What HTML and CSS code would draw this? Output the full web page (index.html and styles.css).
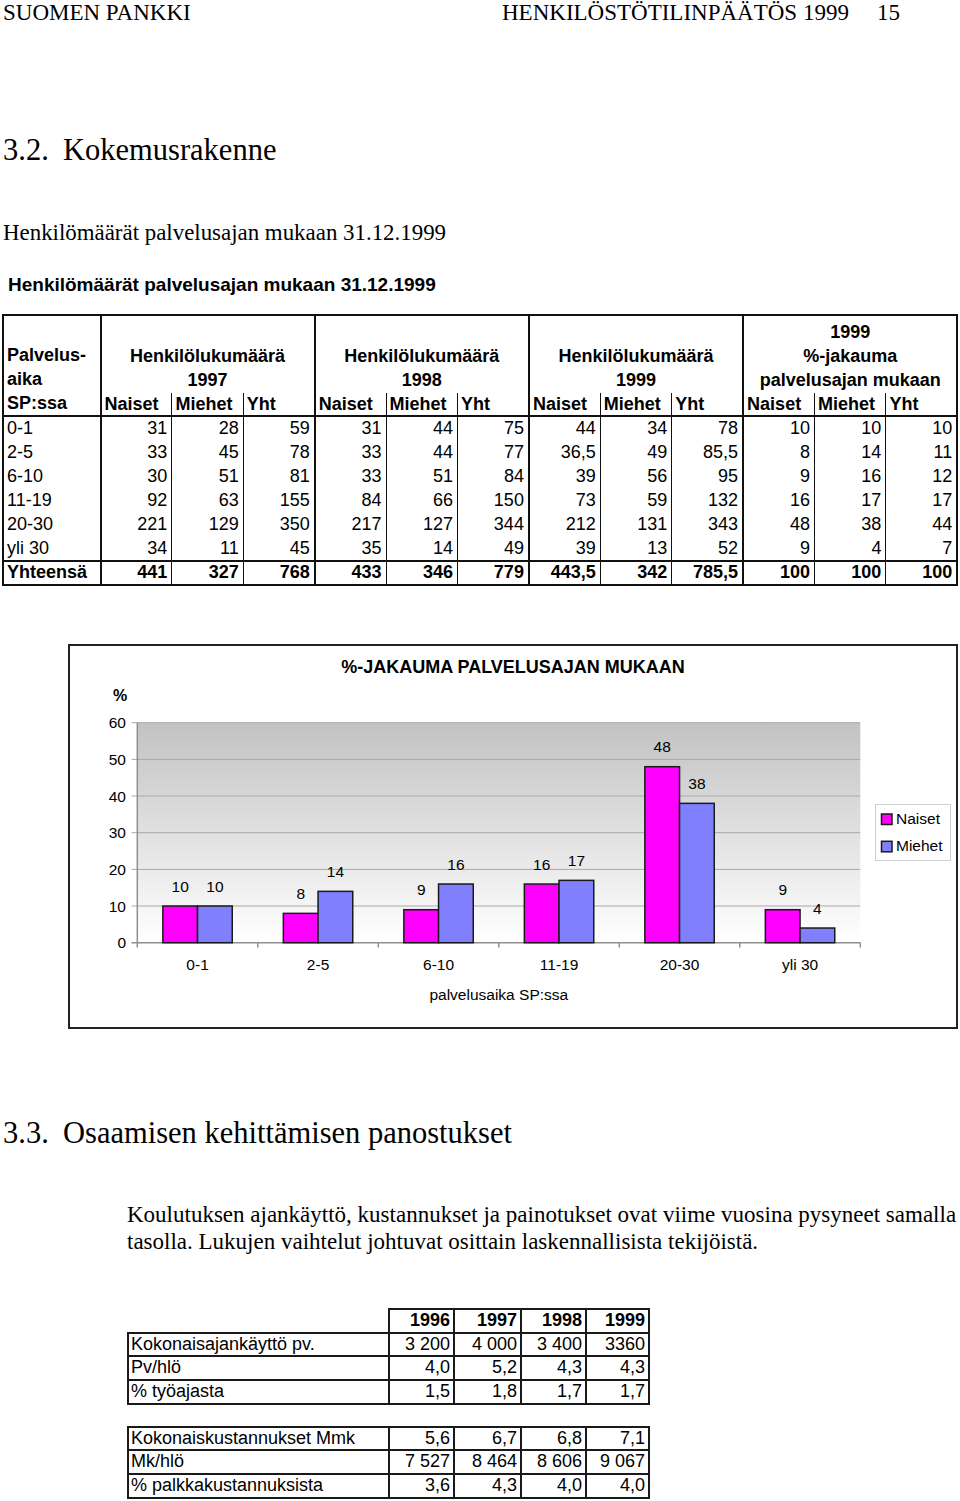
FILE: index.html
```html
<!DOCTYPE html>
<html lang="fi">
<head>
<meta charset="utf-8">
<title>Henkilöstötilinpäätös 1999</title>
<link rel="stylesheet" href="styles.css">
</head>
<body>
<header class="page-head">
  <span class="ph-left">SUOMEN PANKKI</span>
  <span class="ph-title">HENKILÖSTÖTILINPÄÄTÖS 1999</span>
  <span class="ph-num">15</span>
</header>

<h2 class="sec sec-a"><span class="sec-no">3.2.</span>Kokemusrakenne</h2>
<p class="sub">Henkilömäärät palvelusajan mukaan 31.12.1999</p>
<p class="tbl-title">Henkilömäärät palvelusajan mukaan 31.12.1999</p>

<table class="exp">
  <colgroup><col class="c-lab"><col span="12" class="c-num"></colgroup>
  <thead>
    <tr class="hr1">
      <th rowspan="2" class="lab-h">Palvelus-<br>aika<br>SP:ssa</th>
      <th colspan="3" class="grp">Henkilölukumäärä<br>1997</th>
      <th colspan="3" class="grp">Henkilölukumäärä<br>1998</th>
      <th colspan="3" class="grp">Henkilölukumäärä<br>1999</th>
      <th colspan="3" class="grp">1999<br>%-jakauma<br>palvelusajan mukaan</th>
    </tr>
    <tr class="hr2">
      <th class="g1">Naiset</th><th>Miehet</th><th>Yht</th>
      <th class="g1">Naiset</th><th>Miehet</th><th>Yht</th>
      <th class="g1">Naiset</th><th>Miehet</th><th>Yht</th>
      <th class="g1">Naiset</th><th>Miehet</th><th>Yht</th>
    </tr>
  </thead>
  <tbody>
    <tr><td class="lab">0-1</td><td class="g1">31</td><td>28</td><td>59</td><td class="g1">31</td><td>44</td><td>75</td><td class="g1">44</td><td>34</td><td>78</td><td class="g1">10</td><td>10</td><td>10</td></tr>
    <tr><td class="lab">2-5</td><td class="g1">33</td><td>45</td><td>78</td><td class="g1">33</td><td>44</td><td>77</td><td class="g1">36,5</td><td>49</td><td>85,5</td><td class="g1">8</td><td>14</td><td>11</td></tr>
    <tr><td class="lab">6-10</td><td class="g1">30</td><td>51</td><td>81</td><td class="g1">33</td><td>51</td><td>84</td><td class="g1">39</td><td>56</td><td>95</td><td class="g1">9</td><td>16</td><td>12</td></tr>
    <tr><td class="lab">11-19</td><td class="g1">92</td><td>63</td><td>155</td><td class="g1">84</td><td>66</td><td>150</td><td class="g1">73</td><td>59</td><td>132</td><td class="g1">16</td><td>17</td><td>17</td></tr>
    <tr><td class="lab">20-30</td><td class="g1">221</td><td>129</td><td>350</td><td class="g1">217</td><td>127</td><td>344</td><td class="g1">212</td><td>131</td><td>343</td><td class="g1">48</td><td>38</td><td>44</td></tr>
    <tr><td class="lab">yli 30</td><td class="g1">34</td><td>11</td><td>45</td><td class="g1">35</td><td>14</td><td>49</td><td class="g1">39</td><td>13</td><td>52</td><td class="g1">9</td><td>4</td><td>7</td></tr>
    <tr class="total"><td class="lab">Yhteensä</td><td class="g1">441</td><td>327</td><td>768</td><td class="g1">433</td><td>346</td><td>779</td><td class="g1">443,5</td><td>342</td><td>785,5</td><td class="g1">100</td><td>100</td><td>100</td></tr>
  </tbody>
</table>

<figure class="chart">
  <svg class="chart-svg" width="886" height="381" viewBox="70 644 886 381" xmlns="http://www.w3.org/2000/svg">
    <defs>
      <linearGradient id="plotbg" x1="0" y1="0" x2="0" y2="1">
        <stop offset="0" stop-color="#c2c2c2"/>
        <stop offset="1" stop-color="#ffffff"/>
      </linearGradient>
    </defs>
    <text class="c-title" x="513" y="671" text-anchor="middle">%-JAKAUMA PALVELUSAJAN MUKAAN</text>
    <text class="c-unit" x="120" y="698.5" text-anchor="middle">%</text>

    <rect x="137.3" y="720.7" width="723" height="220" fill="url(#plotbg)"/>
    <g class="grid">
      <line x1="131.5" y1="720.7" x2="860.3" y2="720.7"/>
      <line x1="131.5" y1="757.4" x2="860.3" y2="757.4"/>
      <line x1="131.5" y1="794" x2="860.3" y2="794"/>
      <line x1="131.5" y1="830.7" x2="860.3" y2="830.7"/>
      <line x1="131.5" y1="867.4" x2="860.3" y2="867.4"/>
      <line x1="131.5" y1="904" x2="860.3" y2="904"/>
    </g>
    <g class="axis">
      <line x1="137.3" y1="720.7" x2="137.3" y2="940.7"/>
      <line x1="131.5" y1="940.7" x2="860.3" y2="940.7"/>
      <line x1="137.3" y1="940.7" x2="137.3" y2="945.5"/>
      <line x1="257.8" y1="940.7" x2="257.8" y2="945.5"/>
      <line x1="378.3" y1="940.7" x2="378.3" y2="945.5"/>
      <line x1="498.8" y1="940.7" x2="498.8" y2="945.5"/>
      <line x1="619.3" y1="940.7" x2="619.3" y2="945.5"/>
      <line x1="739.8" y1="940.7" x2="739.8" y2="945.5"/>
      <line x1="860.3" y1="940.7" x2="860.3" y2="945.5"/>
    </g>
    <g class="ylab" text-anchor="end">
      <text x="126" y="726.2">60</text>
      <text x="126" y="762.9">50</text>
      <text x="126" y="799.5">40</text>
      <text x="126" y="836.2">30</text>
      <text x="126" y="872.9">20</text>
      <text x="126" y="909.5">10</text>
      <text x="126" y="946.2">0</text>
    </g>

    <g class="bars">
      <rect class="b-n" x="162.85" y="904.03" width="34.7" height="36.67"/>
      <rect class="b-m" x="197.55" y="904.03" width="34.7" height="36.67"/>
      <rect class="b-n" x="283.35" y="911.37" width="34.7" height="29.33"/>
      <rect class="b-m" x="318.05" y="889.37" width="34.7" height="51.33"/>
      <rect class="b-n" x="403.85" y="907.7" width="34.7" height="33"/>
      <rect class="b-m" x="438.55" y="882.03" width="34.7" height="58.67"/>
      <rect class="b-n" x="524.35" y="882.03" width="34.7" height="58.67"/>
      <rect class="b-m" x="559.05" y="878.37" width="34.7" height="62.33"/>
      <rect class="b-n" x="644.85" y="764.7" width="34.7" height="176"/>
      <rect class="b-m" x="679.55" y="801.37" width="34.7" height="139.33"/>
      <rect class="b-n" x="765.35" y="907.7" width="34.7" height="33"/>
      <rect class="b-m" x="800.05" y="926.03" width="34.7" height="14.67"/>
    </g>

    <g class="vals" text-anchor="middle">
      <text x="180.2" y="889.5">10</text>
      <text x="214.9" y="889.5">10</text>
      <text x="300.7" y="896.9">8</text>
      <text x="335.4" y="874.9">14</text>
      <text x="421.2" y="893.2">9</text>
      <text x="455.9" y="867.5">16</text>
      <text x="541.7" y="867.5">16</text>
      <text x="576.4" y="863.9">17</text>
      <text x="662.2" y="750.2">48</text>
      <text x="696.9" y="786.9">38</text>
      <text x="782.7" y="893.2">9</text>
      <text x="817.4" y="911.5">4</text>
    </g>

    <g class="cats" text-anchor="middle">
      <text x="197.55" y="967.5">0-1</text>
      <text x="318.05" y="967.5">2-5</text>
      <text x="438.55" y="967.5">6-10</text>
      <text x="559.05" y="967.5">11-19</text>
      <text x="679.55" y="967.5">20-30</text>
      <text x="800.05" y="967.5">yli 30</text>
    </g>
    <text class="c-axis" x="498.8" y="997.5" text-anchor="middle">palvelusaika SP:ssa</text>

    <g class="legend">
      <rect class="lg-box" x="875.5" y="802.5" width="75" height="56"/>
      <rect class="b-n" x="881.5" y="812" width="10.5" height="10.5"/>
      <text x="896" y="822.3">Naiset</text>
      <rect class="b-m" x="881.5" y="839.3" width="10.5" height="10.5"/>
      <text x="896" y="849.3">Miehet</text>
    </g>
  </svg>
</figure>

<h2 class="sec sec-b"><span class="sec-no">3.3.</span>Osaamisen kehittämisen panostukset</h2>
<p class="para">Koulutuksen ajankäyttö, kustannukset ja painotukset ovat viime vuosina pysyneet samalla<br>tasolla. Lukujen vaihtelut johtuvat osittain laskennallisista tekijöistä.</p>

<table class="small t1">
  <colgroup><col class="s-lab"><col class="s-a"><col class="s-b"><col class="s-c"><col class="s-d"></colgroup>
  <tr class="yh"><td class="corner"></td><th>1996</th><th>1997</th><th>1998</th><th>1999</th></tr>
  <tr><td class="lab">Kokonaisajankäyttö pv.</td><td>3 200</td><td>4 000</td><td>3 400</td><td>3360</td></tr>
  <tr><td class="lab">Pv/hlö</td><td>4,0</td><td>5,2</td><td>4,3</td><td>4,3</td></tr>
  <tr><td class="lab">% työajasta</td><td>1,5</td><td>1,8</td><td>1,7</td><td>1,7</td></tr>
</table>

<table class="small t2">
  <colgroup><col class="s-lab"><col class="s-a"><col class="s-b"><col class="s-c"><col class="s-d"></colgroup>
  <tr><td class="lab">Kokonaiskustannukset Mmk</td><td>5,6</td><td>6,7</td><td>6,8</td><td>7,1</td></tr>
  <tr><td class="lab">Mk/hlö</td><td>7 527</td><td>8 464</td><td>8 606</td><td>9 067</td></tr>
  <tr><td class="lab">% palkkakustannuksista</td><td>3,6</td><td>4,3</td><td>4,0</td><td>4,0</td></tr>
</table>
</body>
</html>
```

FILE: styles.css
```css
* { box-sizing: border-box; }
html, body { margin: 0; padding: 0; background: #fff; color: #000; }
body {
  width: 960px;
  font-family: "Liberation Serif", "Times New Roman", serif;
}

/* page header */
.page-head {
  display: flex;
  padding-left: 3px;
  height: 24px;
  font-size: 23px;
  line-height: 25px;
  white-space: nowrap;
}
.ph-left { width: 499px; }
.ph-title { width: 375px; }

/* section headings */
.sec {
  margin: 0 0 0 3px;
  font-size: 30.5px;
  font-weight: normal;
  line-height: 36px;
  white-space: nowrap;
}
.sec-a { margin-top: 108px; }
.sec-b { margin-top: 86px; }
.sec-no { display: inline-block; width: 60px; }

.sub {
  margin: 52px 0 0 3px;
  font-size: 22.9px;
  line-height: 26px;
}
.tbl-title {
  margin: 28px 0 0 8px;
  font: bold 19px/22px "Liberation Sans", Arial, sans-serif;
}

/* big table */
.exp {
  margin: 18px 0 0 2px;
  border-collapse: collapse;
  table-layout: fixed;
  width: 954.5px;
  border: 2px solid #111;
  font: 18px "Liberation Sans", Arial, sans-serif;
}
.exp .c-lab { width: 97.5px; }
.exp .c-num { width: 71.4px; }
.exp th { font-weight: bold; padding: 0; }
.exp .hr1 th {
  vertical-align: bottom;
  text-align: center;
  line-height: 24px;
  padding: 4px 0 1px;
  white-space: nowrap;
}
.exp .hr1 .lab-h {
  text-align: left;
  padding: 0 0 0 3px;
  border-bottom: 2px solid #111;
}
.exp .hr1 .grp { border-left: 2px solid #111; }
.exp .hr2 th {
  text-align: left;
  line-height: 22px;
  padding: 0 0 0 3px;
  border-left: 1px solid #111;
  border-bottom: 2px solid #111;
}
.exp td {
  text-align: right;
  line-height: 23.9px;
  padding: 0 4px 0 0;
  border-left: 1px solid #111;
  white-space: nowrap;
}
.exp td.lab { text-align: left; padding: 0 0 0 3px; border-left: none; }
.exp .g1, .exp .hr2 th.g1 { border-left: 2px solid #111; }
.exp .total td {
  font-weight: bold;
  line-height: 21.5px;
  border-top: 2px solid #111;
}

/* chart */
.chart {
  margin: 58px 0 0 68px;
  width: 890px;
  height: 385px;
  border: 2px solid #222;
}
.chart-svg { display: block; }
.chart-svg text { font-family: "Liberation Sans", Arial, sans-serif; fill: #000; }
.chart-svg .c-title { font-size: 18px; font-weight: bold; }
.chart-svg .c-unit { font-size: 16px; font-weight: bold; }
.chart-svg .ylab text,
.chart-svg .vals text,
.chart-svg .cats text,
.chart-svg .c-axis,
.chart-svg .legend text { font-size: 15.5px; }
.chart-svg .grid line { stroke: #a9a9a9; stroke-width: 1; }
.chart-svg .axis line { stroke: #8f8f8f; stroke-width: 1.5; }
.chart-svg .b-n { fill: #ff00ff; stroke: #1a1a1a; stroke-width: 1.5; }
.chart-svg .b-m { fill: #8080ff; stroke: #1a1a1a; stroke-width: 1.5; }
.chart-svg .lg-box { fill: #fff; stroke: #cfcfcf; stroke-width: 1; }

/* paragraph */
.para {
  margin: 50px 0 0 127px;
  font-size: 23px;
  line-height: 27px;
  white-space: nowrap;
}

/* small tables */
.small {
  border-collapse: collapse;
  table-layout: fixed;
  width: 521px;
  margin-left: 127px;
  font: 18px "Liberation Sans", Arial, sans-serif;
}
.small .s-lab { width: 261px; }
.small .s-a { width: 65px; }
.small .s-b { width: 67px; }
.small .s-c { width: 65px; }
.small .s-d { width: 63px; }
.small td, .small th {
  border: 2px solid #1a1a1a;
  line-height: 21.7px;
  padding: 0 3px 0 0;
  text-align: right;
  white-space: nowrap;
}
.small th { font-weight: bold; }
.small td.lab { text-align: left; padding: 0 0 0 2px; }
.small td.corner { border-top: none; border-left: none; }
.t1 { margin-top: 53px; }
.t2 { margin-top: 21px; }
```
